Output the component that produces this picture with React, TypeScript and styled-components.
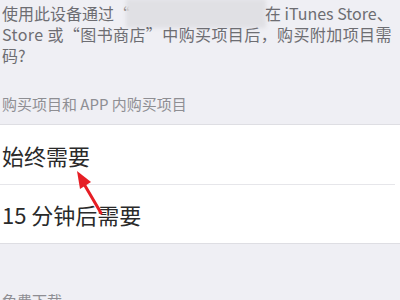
import React from "react";
import styled, { createGlobalStyle } from "styled-components";

const Global = createGlobalStyle`
  html, body {
    margin: 0;
    padding: 0;
    background: #efeff4;
  }
  body {
    font-family: "Noto Sans CJK SC", "Noto Sans", sans-serif;
  }
`;

const Page = styled.div`
  position: relative;
  width: 400px;
  height: 300px;
  overflow: hidden;
  background: #efeff4;
  display: flex;
  flex-direction: column;
`;

const Description = styled.div`
  padding: 3px 0 0 2px;
  font-size: 16px;
  line-height: 21px;
  color: #6d6d72;
  white-space: nowrap;
`;

const Line = styled.div<{ $spacing?: number }>`
  display: block;
  letter-spacing: ${(p) => p.$spacing ?? 0}px;
`;

const Redacted = styled.span`
  display: inline-block;
  width: 132px;
  height: 21px;
  vertical-align: top;
  margin-right: 3px;
  background: #e0e0e4;
  box-shadow: 0 0 4px 4px #e0e0e4;
`;

const SectionHeader = styled.div<{ $top: number; $bottom?: number }>`
  margin-top: ${(p) => p.$top}px;
  margin-bottom: ${(p) => p.$bottom ?? 0}px;
  padding-left: 2px;
  font-size: 15px;
  line-height: 20px;
  color: #8e8e93;
  white-space: nowrap;
`;

const Group = styled.div`
  background: #ffffff;
  border-top: 1px solid #dedee3;
  border-bottom: 1px solid #dedee3;
`;

const Row = styled.div<{ $height: number; $divider?: boolean }>`
  height: ${(p) => p.$height}px;
  display: flex;
  align-items: center;
  padding-left: 2px;
  font-size: 22px;
  color: #2a2a2a;
  white-space: nowrap;
  box-sizing: border-box;
  border-bottom: ${(p) => (p.$divider ? "1px solid #e6e6ea" : "none")};
  margin-right: ${(p) => (p.$divider ? "5px" : "0")};
`;

const ArrowOverlay = styled.svg`
  position: absolute;
  left: 0;
  top: 0;
  pointer-events: none;
`;

export default function App() {
  return (
    <>
      <Global />
      <Page>
        <Description>
          <Line>
            使用此设备通过“<Redacted />在 iTunes Store、
          </Line>
          <Line $spacing={0.4}>Store 或“图书商店”中购买项目后，购买附加项目需</Line>
          <Line>码?</Line>
        </Description>
        <SectionHeader $top={28} $bottom={10}>
          购买项目和 APP 内购买项目
        </SectionHeader>
        <Group>
          <Row $height={60} $divider>
            始终需要
          </Row>
          <Row $height={58}>15 分钟后需要</Row>
        </Group>
        <SectionHeader $top={47}>免费下载</SectionHeader>
        <ArrowOverlay width="400" height="300" viewBox="0 0 400 300">
          <line
            x1="101"
            y1="213"
            x2="84"
            y2="184"
            stroke="#e61e25"
            strokeWidth="3"
            strokeLinecap="round"
          />
          <polygon points="77,171 91,182 80,189" fill="#e61e25" />
        </ArrowOverlay>
      </Page>
    </>
  );
}
